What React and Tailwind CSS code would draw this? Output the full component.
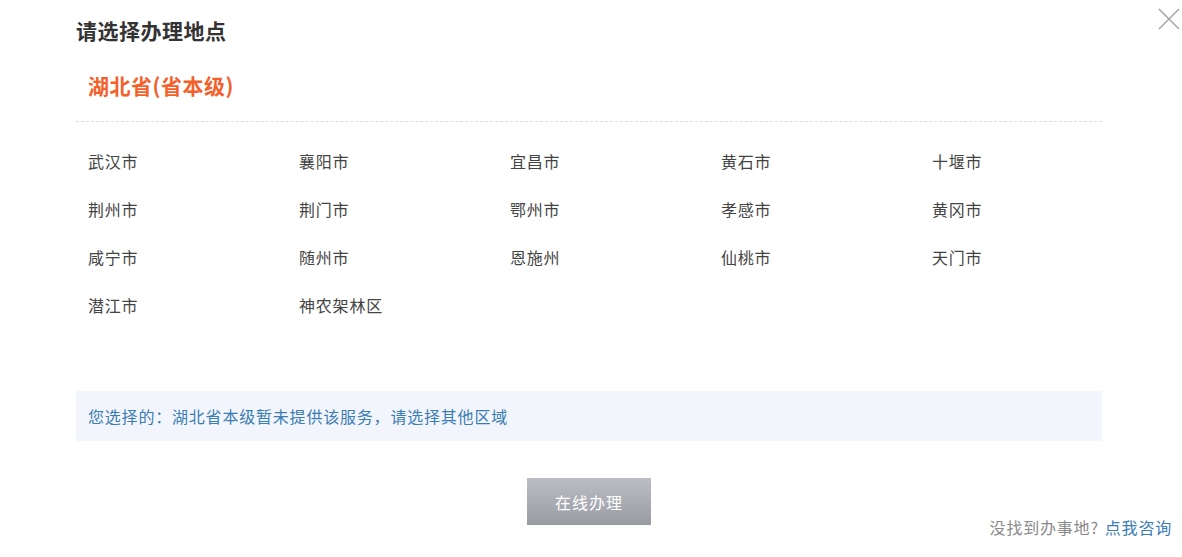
const cities = [
  "武汉市", "襄阳市", "宜昌市", "黄石市", "十堰市",
  "荆州市", "荆门市", "鄂州市", "孝感市", "黄冈市",
  "咸宁市", "随州市", "恩施州", "仙桃市", "天门市",
  "潜江市", "神农架林区",
];

export default function App() {
  return (
    <div
      className="relative w-[1182px] h-[557px] bg-white overflow-hidden"
      style={{ fontFamily: '"Noto Sans CJK SC", "Noto Sans", sans-serif' }}
    >
      {/* close */}
      <button className="absolute right-[2px] top-[8px] w-[22px] h-[22px]">
        <svg width="22" height="22" viewBox="0 0 22 22">
          <path d="M1 1 L21 21 M21 1 L1 21" stroke="#a9a9a9" strokeWidth="1.6" />
        </svg>
      </button>

      <div className="pl-[76px] w-[1102px]">
        <h2 className="pt-[17px] h-[48px] text-[21px] leading-[26px] tracking-[0.5px] font-bold text-[#333]">
          请选择办理地点
        </h2>

        <div className="pl-[12px] h-[73px] pt-[24px] text-[21px] leading-[26px] tracking-[0.5px] font-bold text-[#f4602b]">
          湖北省(省本级)
        </div>

        <div className="border-t border-dashed border-[#dcdcdc]" />

        <div className="grid grid-cols-[repeat(5,211px)] pl-[12px] pt-[27px] h-[269px] content-start">
          {cities.map((c) => (
            <div key={c} className="h-[48px] text-[16px] leading-[24px] tracking-[0.8px] text-[#444]">
              {c}
            </div>
          ))}
        </div>

        <div className="h-[50px] bg-[#f2f6fc] pl-[12px] flex items-center text-[16px] tracking-[0.8px] text-[#3b7cb5]">
          您选择的：湖北省本级暂未提供该服务，请选择其他区域
        </div>

        <div className="flex justify-center pt-[37px]">
          <button className="w-[124px] h-[47px] bg-gradient-to-b from-[#bcbec5] to-[#999ba3] text-white text-[16px] tracking-[1px]">
            在线办理
          </button>
        </div>
      </div>

      <div className="absolute right-[10px] top-[516px] text-[16px] leading-[22px] tracking-[0.8px]">
        <span className="text-[#8a8a8a]">没找到办事地?</span>
        <span className="text-[#3b7cb5] ml-[6px]">点我咨询</span>
      </div>
    </div>
  );
}
